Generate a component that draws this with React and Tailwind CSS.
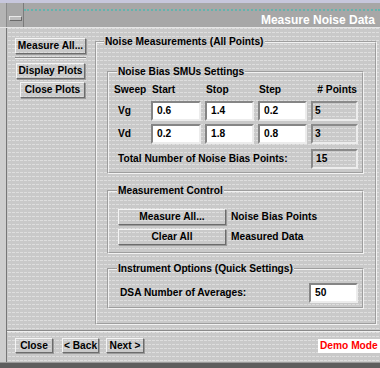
import React from "react";

function Btn({ className = "", children }) {
  return (
    <div
      className={
        "flex items-center justify-center whitespace-nowrap border border-t-[#f4f4f4] border-l-[#f4f4f4] border-b-[#6c6c6c] border-r-[#6c6c6c] shadow-[1px_1px_0_#9a9a9a] leading-[12px] " +
        className
      }
    >
      {children}
    </div>
  );
}

function Field({ value, className = "" }) {
  return (
    <div
      className={
        "h-[20px] bg-white border-2 border-t-[#858585] border-l-[#858585] border-b-[#ececec] border-r-[#ececec] flex items-center pl-[4px] leading-[12px] " +
        className
      }
    >
      {value}
    </div>
  );
}

function RO({ value, className = "" }) {
  return (
    <div
      className={
        "h-[20px] border-2 border-t-[#8a8a8a] border-l-[#8a8a8a] border-b-[#ececec] border-r-[#ececec] flex items-center pl-[2px] leading-[12px] " +
        className
      }
    >
      {value}
    </div>
  );
}

export default function App() {
  return (
    <div className="w-[380px] h-[368px] overflow-hidden flex flex-col font-['Liberation_Sans',Arial,sans-serif] font-bold text-[10.2px] text-black bg-[#cacaca]">
      <div className="h-[3px] shrink-0 bg-[#c7c7dd]" />
      <div className="h-[24px] shrink-0 flex bg-[#a7a7a7]">
        <div className="w-[7px] shrink-0 border-r border-[#8a8a8a] bg-[#b4b4b4]" />
        <div className="w-[17px] shrink-0 border-r border-[#7c7c7c] flex items-start justify-center pt-[13px]">
          <div className="w-[13px] h-[5px] border border-t-[#e8e8e8] border-l-[#e8e8e8] border-b-[#6a6a6a] border-r-[#6a6a6a] bg-[#bcbcbc]" />
        </div>
        <div className="flex-1 relative flex justify-end items-start pt-[10px] pr-[5px]">
          <div className="absolute left-0 right-0 top-[6px] border-t-2 border-dotted border-[#63b4ae]" />
          <span className="text-white text-[12px] leading-[14px]">Measure Noise Data</span>
        </div>
      </div>
      <div className="h-[1px] shrink-0 bg-[#e6e6e6]" />
      <div className="flex-1 flex min-h-0">
        <div className="w-[7px] shrink-0 border-r border-[#777777] bg-[#cecece]" />
        <div className="flex-1 flex flex-col bg-[#c9c9c9] [background-image:linear-gradient(90deg,#c9c9c9_1px,transparent_1px),linear-gradient(#dedede_1px,transparent_1px)] [background-size:4px_4px]">
          <div className="flex items-start pt-[8px]">
            <div className="w-[88px] shrink-0 flex flex-col">
              <Btn className="ml-[8px] mt-[2px] w-[71px] h-[16px]">Measure All...</Btn>
              <div className="ml-[8px] mt-[3px] w-[71px] h-[2px] border-t border-t-[#8a8a8a] border-b border-b-[#f0f0f0]" />
              <Btn className="ml-[9px] mt-[4px] w-[69px] h-[16px]">Display Plots</Btn>
              <Btn className="ml-[13px] mt-[3px] w-[65px] h-[16px]">Close Plots</Btn>
            </div>
            <fieldset className="w-[282px] border-2 [border-style:groove] border-[#f2f2f2] pb-[14px]">
              <legend className="ml-[7px] px-[1px] leading-[12px]">Noise Measurements (All Points)</legend>

              <fieldset className="ml-[10px] mt-[18px] w-[257px] border-2 [border-style:groove] border-[#f2f2f2] pb-[3px]">
                <legend className="ml-[8px] px-[1px] leading-[12px]">Noise Bias SMUs Settings</legend>
                <div className="grid grid-cols-[42px_54px_53px_53px_47px] mt-[6px] leading-[12px]">
                  <div className="pl-[5px]">Sweep</div>
                  <div className="pl-[1px]">Start</div>
                  <div className="pl-[1px]">Stop</div>
                  <div className="pl-[1px]">Step</div>
                  <div className="text-right pr-[1px]"># Points</div>
                </div>
                <div className="grid grid-cols-[42px_54px_53px_53px_47px] mt-[5px]">
                  <div className="pl-[9px] flex items-center leading-[12px]">Vg</div>
                  <Field value="0.6" className="w-[50px]" />
                  <Field value="1.4" className="w-[49px]" />
                  <Field value="0.2" className="w-[49px]" />
                  <RO value="5" className="w-[47px]" />
                </div>
                <div className="grid grid-cols-[42px_54px_53px_53px_47px] mt-[3px]">
                  <div className="pl-[9px] flex items-center leading-[12px]">Vd</div>
                  <Field value="0.2" className="w-[50px]" />
                  <Field value="1.8" className="w-[49px]" />
                  <Field value="0.8" className="w-[49px]" />
                  <RO value="3" className="w-[47px]" />
                </div>
                <div className="flex mt-[5px]">
                  <div className="w-[202px] pl-[9px] flex items-center leading-[12px]">Total Number of Noise Bias Points:</div>
                  <RO value="15" className="w-[47px] pl-[3px]" />
                </div>
              </fieldset>

              <fieldset className="ml-[10px] mt-[11px] w-[257px] border-2 [border-style:groove] border-[#f2f2f2] pb-[7px]">
                <legend className="ml-[8px] px-[1px] leading-[12px]">Measurement Control</legend>
                <div className="flex items-center mt-[12px]">
                  <Btn className="ml-[9px] w-[108px] h-[16px]">Measure All...</Btn>
                  <span className="ml-[5px] leading-[12px]">Noise Bias Points</span>
                </div>
                <div className="flex items-center mt-[4px]">
                  <Btn className="ml-[9px] w-[108px] h-[16px]">Clear All</Btn>
                  <span className="ml-[5px] leading-[12px]">Measured Data</span>
                </div>
              </fieldset>

              <fieldset className="ml-[10px] mt-[9px] w-[257px] border-2 [border-style:groove] border-[#f2f2f2] pb-[4px]">
                <legend className="ml-[8px] px-[1px] leading-[12px]">Instrument Options (Quick Settings)</legend>
                <div className="flex items-center mt-[8px]">
                  <span className="w-[200px] pl-[11px] leading-[12px]">DSA Number of Averages:</span>
                  <Field value="50" className="w-[49px] h-[19px]" />
                </div>
              </fieldset>
            </fieldset>
          </div>

          <div className="mt-[5px] h-[2px] border-t border-t-[#8a8a8a] border-b border-b-[#f0f0f0]" />
          <div className="flex items-center mt-[6px]">
            <Btn className="ml-[8px] w-[38px] h-[15px]">Close</Btn>
            <Btn className="ml-[9px] w-[37px] h-[15px]">&lt; Back</Btn>
            <Btn className="ml-[7px] w-[38px] h-[15px]">Next &gt;</Btn>
            <div className="ml-auto w-[62px] h-[14px] bg-white text-[#ff0000] leading-[12px] flex items-center pl-[2px] whitespace-nowrap">Demo Mode</div>
          </div>
        </div>
      </div>
      <div className="h-[6px] shrink-0 bg-[#5e5e5e] border-t border-[#9a9a9a]" />
    </div>
  );
}
